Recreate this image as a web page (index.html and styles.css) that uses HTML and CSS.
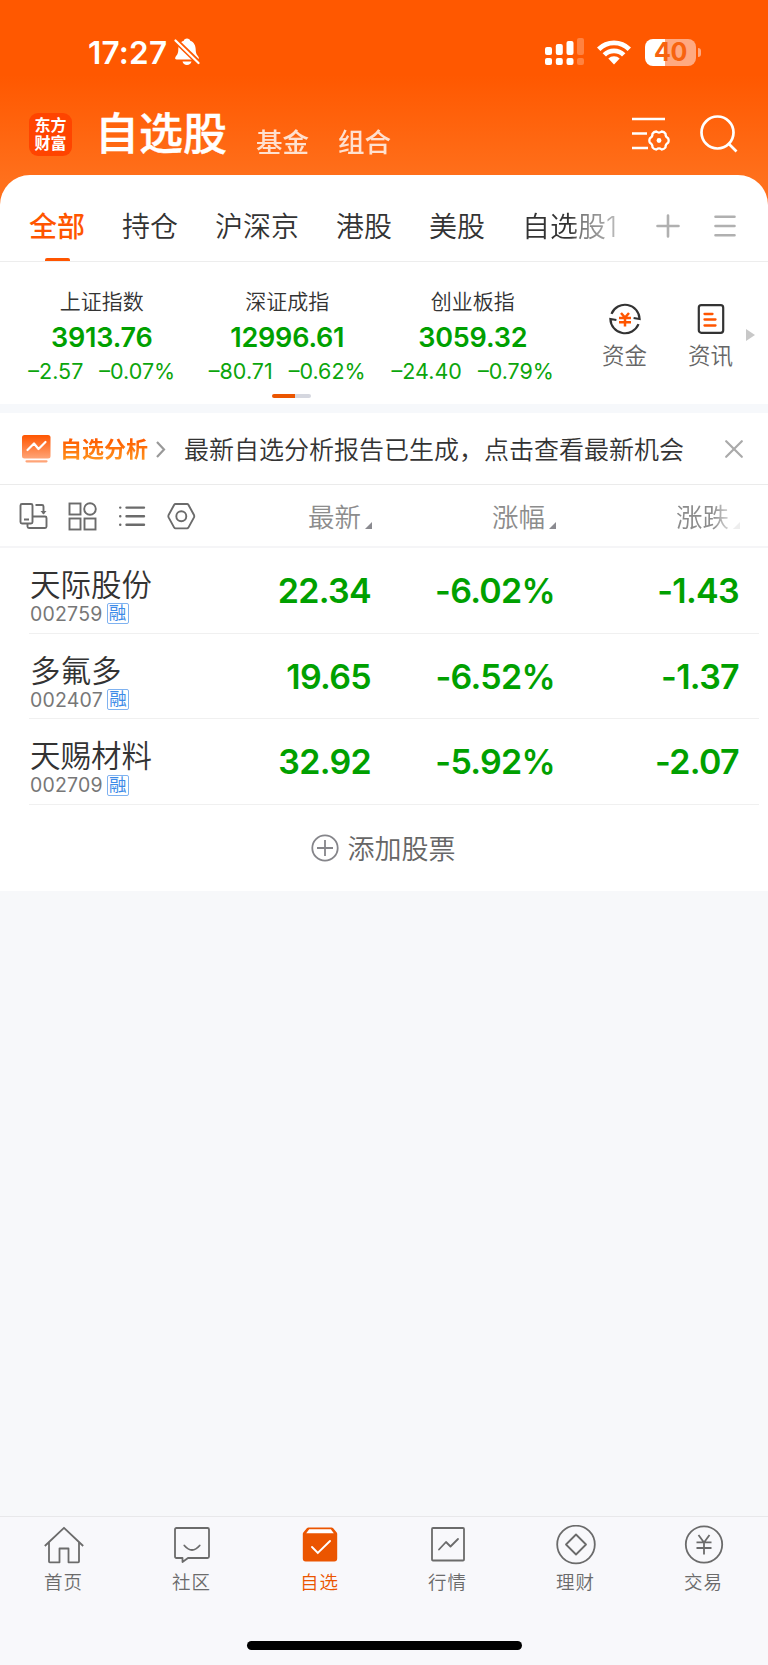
FILE: index.html
```html
<!DOCTYPE html>
<html lang="zh-CN">

<head>
	<meta charset="utf-8">
	<meta name="viewport" content="width=device-width, initial-scale=1.0">
	<title>自选股</title>
	<link rel="stylesheet" href="styles.css">
</head>

<body>

	<header class="top">
		<div class="status">
			<span class="time">17:27</span>
			<svg class="bell" width="26" height="28" viewBox="0 0 26 28">
				<path fill="#fff" d="M13 0.5c1.800 0 3 1 3.200 2.200C20 4 21.700 7.500 21.700 11.500c0 4.500 1.500 5.500 2.800 7.500.8 1.400.2 2.500-1.200 2.500H2.700c-1.500 0-2-1.200-1.200-2.500 1.300-2 2.800-3 2.800-7.500C4.300 7.500 6 4 9.800 2.700 10 1.500 11.200.5 13 .5zM8.500 23.500h9c-.5 2-2.200 3.500-4.500 3.500s-4-1.500-4.500-3.500z" />
				<path stroke="#ff5a00" stroke-width="5.500" d="M0 1L26 26" />
				<path stroke="#fff" stroke-width="2.200" stroke-linecap="round" d="M1.500 2.500L24.500 25" />
			</svg>
			<svg class="signal" width="39" height="28" viewBox="0 0 39 28" fill="#fff">
				<rect x="0" y="9" width="7" height="8" rx="2" />
				<rect x="10.800" y="6" width="7" height="11" rx="2" />
				<rect x="21.500" y="3" width="7" height="14" rx="2" />
				<rect x="32" y="0" width="7" height="17" rx="2" opacity=".25" />
				<rect x="0" y="20" width="7" height="7" rx="2" />
				<rect x="10.800" y="20" width="7" height="7" rx="2" />
				<rect x="21.500" y="20" width="7" height="7" rx="2" />
				<rect x="32" y="20" width="7" height="7" rx="2" opacity=".25" />
			</svg>
			<svg class="wifi" width="34" height="25" viewBox="0 0 34 25">
				<g fill="none" stroke="#fff" stroke-width="4.800">
					<path d="M1.700 9.200a21.800 21.800 0 0 1 30.600 0" />
					<path d="M7.300 14.900a13.800 13.800 0 0 1 19.400 0" />
				</g>
				<path fill="#fff" d="M11.300 18.600a8.100 8.100 0 0 1 11.400 0L17 24.500z" />
			</svg>
			<div class="battery">40</div>
		</div>

		<div class="titlebar">
			<div class="logo">东方<br>财富</div>
			<h1>自选股</h1>
			<a class="sub">基金</a>
			<a class="sub">组合</a>
			<svg class="settings" width="38" height="34" viewBox="0 0 38 34" fill="none" stroke="#fff" stroke-width="2.600">
				<path d="M0 2h33M0 16.500h15M0 31h16" />
				<path stroke-width="2.300" stroke-linejoin="round" d="M36.100 21.200Q37.200 23.500 36.100 25.800 33.400 27.200 33.500 30.300 32.200 32.200 29.600 32.500 27 30.200 24.400 32.500 21.800 32.200 20.500 30.300 20.600 27.200 17.900 25.800 16.800 23.500 17.900 21.200 20.600 19.800 20.500 16.700 21.800 14.800 24.400 14.500 27 16.800 29.600 14.500 32.200 14.800 33.500 16.700 33.400 19.800 36.100 21.200z" />
				<circle cx="27" cy="23.500" r="2.400" fill="#fff" stroke="none" />
			</svg>
			<svg class="search" width="38" height="38" viewBox="0 0 38 38" fill="none" stroke="#fff" stroke-width="2.700">
				<circle cx="17.500" cy="17.500" r="16" />
				<path d="M28.500 28.500l8 8" />
			</svg>
		</div>
	</header>

	<main>
		<nav class="tabs">
			<a class="valgt">全部</a>
			<a>持仓</a>
			<a>沪深京</a>
			<a>港股</a>
			<a>美股</a>
			<a class="fade">自选股1</a>
			<svg class="tabicons" width="80" height="24" viewBox="0 0 80 24" fill="none" stroke="#b0b0b0" stroke-width="2.600" stroke-linecap="round">
				<path d="M1.500 12h21M12 1.500v21" />
				<path d="M59.500 2.800h19M59.500 12h19M59.500 21.300h19" />
			</svg>
		</nav>

		<section class="indices">
			<article>
				<h2>上证指数</h2>
				<p class="tal">3913.76</p>
				<p class="diff"><span>–2.57</span><span>–0.07%</span></p>
			</article>
			<article>
				<h2>深证成指</h2>
				<p class="tal">12996.61</p>
				<p class="diff"><span>–80.71</span><span>–0.62%</span></p>
			</article>
			<article>
				<h2>创业板指</h2>
				<p class="tal">3059.32</p>
				<p class="diff"><span>–24.40</span><span>–0.79%</span></p>
			</article>
			<a class="genvej">
				<svg width="34" height="34" viewBox="0 0 34 34" fill="none">
					<g stroke="#333" stroke-width="2.200">
						<path d="M3.500 11.800A14.600 14.600 0 0 1 31.600 17l-6-1" />
						<path d="M30.500 22.200A14.600 14.600 0 0 1 2.400 17l6 1" />
					</g>
					<path stroke="#ff5500" stroke-width="2.500" d="M13 11l4 4.500 4-4.500M11 16h12M11 20.300h12M17 15v9.500" />
				</svg>
				资金
			</a>
			<a class="genvej">
				<svg width="34" height="34" viewBox="0 0 34 34" fill="none">
					<rect x="4.800" y="3.200" width="24.400" height="27.600" rx="2.500" stroke="#333" stroke-width="2.200" />
					<path stroke="#ff5500" stroke-width="2.300" stroke-linecap="round" d="M10.500 12h8M10.500 17.500h11M10.500 23.500h11" />
				</svg>
				资讯
			</a>
			<i class="pil"></i>
		</section>
		<div class="slider"><i></i></div>

		<section class="analyse">
			<svg width="30" height="28" viewBox="0 0 30 28">
				<defs>
					<linearGradient id="orange" x1="0" y1="0" x2="0" y2="1">
						<stop offset="0" stop-color="#ff5500" />
						<stop offset="1" stop-color="#ffa477" />
					</linearGradient>
				</defs>
				<rect x="0" y="0" width="28.500" height="23.500" rx="2.500" fill="url(#orange)" />
				<path fill="none" stroke="#fff" stroke-width="2.200" stroke-linecap="round" stroke-linejoin="round" d="M5.500 15l6.500-6.500 4.500 5.500 7-7" />
				<path stroke="#ffa477" stroke-width="2.200" stroke-linecap="round" d="M4.500 26.300h20" />
			</svg>
			<b>自选分析</b>
			<svg class="chevron" width="10" height="17" viewBox="0 0 10 17" fill="none" stroke="#999" stroke-width="2.200">
				<path d="M1 1l7 7.500-7 7.500" />
			</svg>
			<p>最新自选分析报告已生成，点击查看最新机会</p>
			<svg class="luk" width="18" height="18" viewBox="0 0 18 18" stroke="#aaa" stroke-width="2.200" stroke-linecap="round">
				<path d="M1.200 1.200l15.600 15.600M16.800 1.200L1.200 16.800" />
			</svg>
		</section>

		<section class="kolonner">
			<div class="vaerktoj">
				<svg width="30" height="30" viewBox="0 0 30 30" fill="none" stroke="#6b6b6b" stroke-width="1.900">
					<rect x="2.500" y="3" width="12" height="19.500" rx="1.500" />
					<path d="M6 18.500h5M17.500 4h6.500q1.500 0 1.500 1.500v7M9.500 22.500v3q0 1.500 1.500 1.500h16q1.500 0 1.500-1.500v-8.500q0-1.500-1.500-1.500H14.500" />
					<path fill="#6b6b6b" stroke="none" d="M22.500 10h6l-3 3.500z" />
				</svg>
				<svg width="30" height="30" viewBox="0 0 30 30" fill="none" stroke="#6b6b6b" stroke-width="1.900">
					<rect x="2.500" y="2.500" width="11" height="11" />
					<circle cx="23" cy="8" r="5.800" />
					<rect x="2.500" y="17.500" width="11" height="11" />
					<rect x="17.500" y="17.500" width="11" height="11" />
				</svg>
				<svg width="30" height="30" viewBox="0 0 30 30" fill="none" stroke="#6b6b6b" stroke-width="2.400" stroke-linecap="round">
					<path d="M3.200 6.600h.1M3.200 15.200h.1M3.200 23.700h.1M9.500 6.600h17.500M9.500 15.200h17.500M9.500 23.700h17.500" />
				</svg>
				<svg width="30" height="30" viewBox="0 0 30 30" fill="none" stroke="#6b6b6b" stroke-width="1.900">
					<path stroke-linejoin="round" d="M9.500 3h11.600q.8 0 1.300.8l5.600 10.200q.5 1.200 0 2.400l-5.600 10.200q-.5.8-1.300.8H9.500q-.8 0-1.300-.8L2.600 16.400q-.5-1.200 0-2.400L8.200 3.800q.5-.8 1.300-.8z" />
					<circle cx="15.300" cy="15.200" r="5" />
				</svg>
			</div>
			<span class="sort">最新<i></i></span>
			<span class="sort">涨幅<i></i></span>
			<span class="sort sidst">涨跌<i></i></span>
		</section>

		<section class="aktier">
			<article>
				<div class="navn">
					<h3>天际股份</h3>
					<p>002759<em>融</em></p>
				</div>
				<span>22.34</span>
				<span>-6.02%</span>
				<span>-1.43</span>
			</article>
			<article>
				<div class="navn">
					<h3>多氟多</h3>
					<p>002407<em>融</em></p>
				</div>
				<span>19.65</span>
				<span>-6.52%</span>
				<span>-1.37</span>
			</article>
			<article>
				<div class="navn">
					<h3>天赐材料</h3>
					<p>002709<em>融</em></p>
				</div>
				<span>32.92</span>
				<span>-5.92%</span>
				<span>-2.07</span>
			</article>
		</section>

		<a class="tilfoj">
			<svg width="28" height="28" viewBox="0 0 28 28" fill="none" stroke="#85858a" stroke-width="1.800">
				<circle cx="14" cy="14" r="12.700" />
				<path d="M6 14h16M14 6v16" />
			</svg>
			<span>添加股票</span>
		</a>
	</main>

	<footer>
		<nav class="bund">
			<a>
				<svg width="40" height="40" viewBox="0 0 40 40" fill="none" stroke="#6b6b6b" stroke-width="1.800" stroke-linejoin="round">
					<path d="M.8 21L20 2.800 39.200 21M5 17.500v19q0 .8.800.8h9.700V23.500h9v13.800h9.700q.8 0 .8-.8v-19" />
				</svg>
				首页
			</a>
			<a>
				<svg width="40" height="40" viewBox="0 0 40 40" fill="none" stroke="#6b6b6b" stroke-width="1.800" stroke-linejoin="round">
					<path d="M4.500 3h31q1.500 0 1.500 1.500v27q0 1.500-1.500 1.500H16l-5.500 4v-4h-6Q3 33 3 31.500v-27Q3 3 4.500 3z" />
					<path stroke-linecap="round" d="M12.300 20.500q7.700 9 15.400 0" />
				</svg>
				社区
			</a>
			<a class="valgt">
				<svg width="40" height="40" viewBox="0 0 40 40" fill="none">
					<path fill="#eb5500" d="M8.500 2.500h23q1 0 1.700.8l3.300 4q.7.800.7 1.800v24.500q0 2.900-2.900 2.900H5.700q-2.900 0-2.900-2.900V9.100q0-1 .7-1.800l3.300-4q.7-.8 1.700-.8z" />
					<path fill="#fff" d="M9.200 4.300h21.600l3 4H6.200z" />
					<path stroke="#fff" stroke-width="1.900" stroke-linecap="round" d="M12 22l5.800 6L30 16" />
				</svg>
				自选
			</a>
			<a>
				<svg width="40" height="40" viewBox="0 0 40 40" fill="none" stroke="#6b6b6b" stroke-width="1.800">
					<rect x="4" y="3" width="32" height="32.500" rx="1" />
					<path stroke-linecap="round" stroke-linejoin="round" d="M11 24.500l7-7.500 4.500 4.500L30 14" />
				</svg>
				行情
			</a>
			<a>
				<svg width="40" height="40" viewBox="0 0 40 40" fill="none" stroke="#6b6b6b" stroke-width="1.800" stroke-linejoin="round">
					<circle cx="20" cy="19.500" r="18.800" />
					<path d="M20 9.500l10 10-10 10-10-10z" />
				</svg>
				理财
			</a>
			<a>
				<svg width="40" height="40" viewBox="0 0 40 40" fill="none" stroke="#6b6b6b" stroke-width="1.800">
					<circle cx="20" cy="19.500" r="18.200" />
					<path d="M14.500 10l5.500 7.500 5.500-7.500M12.500 17.300h15M12.500 23h15M20 17v12.500" />
				</svg>
				交易
			</a>
		</nav>
		<div class="homebar"></div>
	</footer>

</body>

</html>
```

FILE: styles.css
```css
* {
	box-sizing: border-box;
}

body {
	margin: 0;
	width: 768px;
	height: 1665px;
	display: flex;
	flex-direction: column;
	background-color: #f7f8fa;
	font-family: Inter, 'Noto Sans CJK SC', sans-serif;
	color: #333;
}

h1,
h2,
h3,
p {
	margin: 0;
	font-weight: 400;
}

svg {
	display: block;
	flex: none;
}

/* top */

.top {
	height: 215px;
	flex: none;
	background: linear-gradient(#ff5800 75px, #ff701c 180px);
	color: #fff;
}

.status {
	height: 90px;
	padding: 14px 67px 0 88px;
	display: flex;
	align-items: center;
}

.time {
	font-size: 31.500px;
	font-weight: 600;
	line-height: 38px;
	letter-spacing: .2px;
	width: 86px;
	padding-top: 1px;
}

.signal {
	margin-left: auto;
}

.wifi {
	margin-left: 13px;
}

.battery {
	position: relative;
	width: 51px;
	height: 27px;
	margin-left: 14px;
	margin-right: 5px;
	border-radius: 8px;
	background: linear-gradient(90deg, #fff 40%, #ffa981 40%);
	color: #f7630f;
	font-size: 25px;
	font-weight: 700;
	line-height: 27px;
	letter-spacing: -.5px;
	text-align: center;
}

.battery::after {
	content: "";
	position: absolute;
	right: -5px;
	top: 9px;
	width: 3px;
	height: 9px;
	border-radius: 0 4px 4px 0;
	background-color: #ffa981;
}

.titlebar {
	height: 85px;
	padding: 2px 30px 0 29px;
	display: flex;
	align-items: center;
}

.logo {
	width: 43px;
	height: 43px;
	margin-top: 2px;
	padding-top: 3px;
	border-radius: 9px;
	background-color: #ff4400;
	font-size: 16px;
	font-weight: 700;
	line-height: 18px;
	text-align: center;
}

h1 {
	margin-left: 23px;
	font-size: 44px;
	font-weight: 500;
	line-height: 60px;
	width: 133px;
	-webkit-text-stroke: .4px #fff;
}

.sub {
	font-size: 26.500px;
	font-weight: 500;
	line-height: 40px;
	opacity: .8;
	margin-left: 29px;
	padding-top: 16px;
}

.sub:first-of-type {
	margin-left: 28px;
}

.settings {
	margin-left: auto;
	margin-top: 1px;
}

.search {
	margin-left: 30px;
}

/* tabs */

main {
	margin-top: -40px;
	flex: none;
	background-color: #fff;
	border-radius: 30px 30px 0 0;
}

.tabs {
	height: 87px;
	padding: 0 32px 0 29px;
	display: flex;
	align-items: center;
	gap: 37px;
	border-bottom: 1px solid #ededed;
}

.tabs a {
	font-size: 28px;
	font-weight: 350;
	height: 86px;
	padding-top: 10px;
	line-height: 84px;
	white-space: nowrap;
}

.tabs .valgt {
	position: relative;
	color: #ff5500;
	font-weight: 500;
}

.tabs .valgt::after {
	content: "";
	position: absolute;
	left: 16px;
	bottom: 0;
	width: 25px;
	height: 3px;
	border-radius: 2px 2px 0 0;
	background-color: #ff5500;
}

.tabs .fade {
	background: linear-gradient(90deg, #333 50%, #777 62%, #bbb 100%);
	-webkit-background-clip: text;
	background-clip: text;
	color: transparent;
}

.tabicons {
	margin-left: auto;
	margin-top: 15px;
}

/* indeks */

.indices {
	height: 131px;
	padding-left: 9px;
	display: flex;
}

.indices article {
	width: 185.500px;
	padding-top: 24px;
	text-align: center;
}

h2 {
	font-size: 21px;
	font-weight: 350;
	line-height: 32px;
}

.tal {
	font-size: 27px;
	font-weight: 600;
	line-height: 39px;
	letter-spacing: -.2px;
	color: #00a000;
}

.diff {
	display: flex;
	justify-content: center;
	gap: 16px;
	font-size: 21.500px;
	line-height: 29px;
	color: #0ca50c;
	white-space: nowrap;
}

.genvej {
	width: 86px;
	padding-top: 40px;
	margin-left: 16px;
	display: flex;
	flex-direction: column;
	align-items: center;
	font-size: 22.500px;
	font-weight: 350;
	line-height: 39px;
	color: #666;
}

.genvej + .genvej {
	margin-left: 0;
}

.pil {
	margin: 67px 0 0 -8px;
	width: 0;
	height: 0;
	border: 6px solid transparent;
	border-left: 9px solid #c8c8c8;
	border-right: 0;
}

.slider {
	height: 20px;
	padding: 1px 0 0 272px;
	border-bottom: 9px solid #f6f8fb;
}

.slider i {
	display: block;
	width: 39px;
	height: 4px;
	border-radius: 2px;
	background: linear-gradient(90deg, #eb5500 60%, #d5d7df 60%);
}

/* analyse */

.analyse {
	height: 72px;
	padding: 1px 25px 0 22px;
	display: flex;
	align-items: center;
	border-bottom: 1px solid #ebebeb;
}

.analyse b {
	margin-left: 8px;
	font-size: 22px;
	font-weight: 700;
	line-height: 34px;
	background: linear-gradient(#ff5a00 20%, #ff9a20 90%);
	-webkit-background-clip: text;
	background-clip: text;
	color: transparent;
}

.chevron {
	margin-left: 8px;
}

.analyse p {
	margin-left: 18px;
	padding-top: 2px;
	font-size: 25px;
	font-weight: 350;
	line-height: 36px;
}

.luk {
	margin-left: auto;
}

/* kolonner */

.kolonner,
.aktier article {
	display: grid;
	align-items: center;
}

.kolonner {
	height: 63px;
	padding-left: 18px;
	grid-template-columns: 207px 147px 184px 184px;
	border-bottom: 2px solid #f5f5f7;
}

.vaerktoj {
	display: flex;
	gap: 19.300px;
}

.sort {
	display: flex;
	align-items: flex-end;
	justify-content: flex-end;
	gap: 4px;
	padding-top: 2px;
	font-size: 26.500px;
	font-weight: 350;
	line-height: 40px;
	color: #8c8c8c;
}

.sort i {
	width: 0;
	height: 0;
	margin-bottom: 8px;
	border-bottom: 7px solid #8a8a90;
	border-left: 7px solid transparent;
}

.sidst {
	-webkit-mask-image: linear-gradient(90deg, #000 85%, rgba(0, 0, 0, .15) 97%);
	mask-image: linear-gradient(90deg, #000 85%, rgba(0, 0, 0, .15) 97%);
}

/* aktier */

.aktier {
	padding: 0 9px 0 29px;
}

.aktier article {
	height: 85.700px;
	grid-template-columns: 190px 152px 184px 184px;
	border-bottom: 1px solid #f0f0f0;
}

.aktier span {
	padding-top: 1px;
	font-size: 34px;
	font-weight: 600;
	line-height: 44px;
	letter-spacing: -.7px;
	text-align: right;
	color: #00a000;
}

.navn {
	padding: 11px 0 0 1px;
}

h3 {
	font-size: 30.500px;
	font-weight: 350;
	line-height: 36px;
}

.navn p {
	display: flex;
	align-items: center;
	gap: 4px;
	font-size: 19.500px;
	line-height: 22px;
	letter-spacing: .2px;
	color: #777;
}

.navn em {
	width: 22px;
	height: 21px;
	border: 1px solid #7fb2f0;
	border-radius: 2px;
	font-style: normal;
	font-size: 17.500px;
	line-height: 18px;
	letter-spacing: 0;
	text-align: center;
	color: #3d8be8;
}

.tilfoj {
	height: 86px;
	padding-right: 2px;
	display: flex;
	align-items: center;
	justify-content: center;
	gap: 9px;
	font-size: 27px;
	font-weight: 350;
	color: #666;
}

.tilfoj span {
	padding-bottom: 2px;
}

/* bund */

footer {
	margin-top: auto;
	height: 149px;
	background-color: #f8f8fb;
	border-top: 1px solid #e8e8ea;
}

.bund {
	height: 124px;
	display: flex;
}

.bund a {
	flex: 1;
	padding: 8px 1px 0 0;
	display: flex;
	flex-direction: column;
	align-items: center;
	font-size: 18.500px;
	font-weight: 350;
	letter-spacing: 1px;
	line-height: 34px;
	color: #6b6b6b;
}

.bund .valgt {
	color: #eb5500;
}

.homebar {
	width: 275px;
	height: 9px;
	margin: 0 auto;
	border-radius: 5px;
	background-color: #000;
}
```
